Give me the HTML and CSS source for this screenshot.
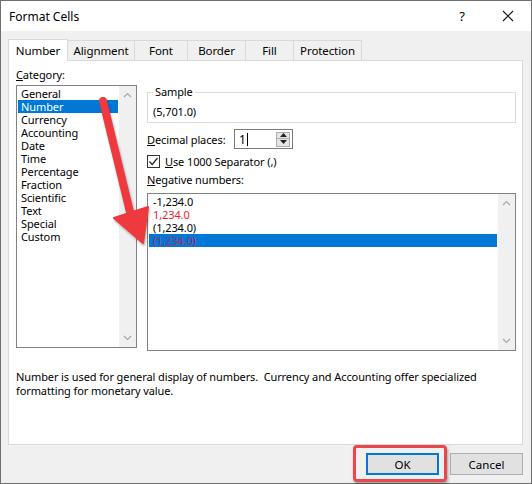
FILE: index.html
```html
<!DOCTYPE html>
<html lang="en">
<head>
    <meta charset="UTF-8">
    <title>Format Cells</title>
    <link rel="stylesheet" href="styles.css">
</head>
<body>

<div class="dialog">
    <div class="titlebar">
        <span class="title">Format Cells</span>
        <span class="help">?</span>
        <span class="close">
            <svg width="12" height="12" viewBox="0 0 12 12"><path d="M1 1 L11 11 M11 1 L1 11" stroke="#111" stroke-width="1.1" fill="none"/></svg>
        </span>
    </div>

    <div class="content">
        <div class="tabs">
            <div class="tab active tab-number">Number</div>
            <div class="tab tab-alignment">Alignment</div>
            <div class="tab tab-font">Font</div>
            <div class="tab tab-border">Border</div>
            <div class="tab tab-fill">Fill</div>
            <div class="tab tab-protection">Protection</div>
        </div>

        <div class="panel">
            <div class="main">
                <div class="left">
                    <div class="label"><u>C</u>ategory:</div>
                    <div class="listbox category">
                        <ul class="items">
                            <li>General</li>
                            <li class="sel">Number</li>
                            <li>Currency</li>
                            <li>Accounting</li>
                            <li>Date</li>
                            <li>Time</li>
                            <li>Percentage</li>
                            <li>Fraction</li>
                            <li>Scientific</li>
                            <li>Text</li>
                            <li>Special</li>
                            <li>Custom</li>
                        </ul>
                        <div class="scrollbar">
                            <svg width="9" height="6" viewBox="0 0 9 6"><polyline points="1,5 4.5,1.5 8,5" fill="none" stroke="#a8a8a8" stroke-width="1.2"/></svg>
                            <svg width="9" height="6" viewBox="0 0 9 6"><polyline points="1,1 4.5,4.5 8,1" fill="none" stroke="#a8a8a8" stroke-width="1.2"/></svg>
                        </div>
                    </div>
                </div>

                <div class="right">
                    <fieldset class="sample">
                        <legend>Sample</legend>
                        <div class="sample-value">(5,701.0)</div>
                    </fieldset>

                    <div class="row decimal">
                        <span class="decimal-label"><u>D</u>ecimal places:</span>
                        <div class="spin">
                            <span class="spin-value">1</span><span class="caret"></span>
                            <div class="spin-btns">
                                <span class="spin-btn"><svg width="7" height="4" viewBox="0 0 7 4"><polygon points="0,4 3.5,0 7,4" fill="#222"/></svg></span>
                                <span class="spin-btn"><svg width="7" height="4" viewBox="0 0 7 4"><polygon points="0,0 3.5,4 7,0" fill="#222"/></svg></span>
                            </div>
                        </div>
                    </div>

                    <div class="row check">
                        <span class="checkbox">
                            <svg width="11" height="11" viewBox="0 0 11 11"><polyline points="1.5,5.5 4.2,8.5 9.5,2" fill="none" stroke="#222" stroke-width="1.2"/></svg>
                        </span>
                        <span><u>U</u>se 1000 Separator (,)</span>
                    </div>

                    <div class="label neg-label"><u>N</u>egative numbers:</div>
                    <div class="listbox negative">
                        <ul class="items">
                            <li>-1,234.0</li>
                            <li class="red">1,234.0</li>
                            <li>(1,234.0)</li>
                            <li class="sel red">(1,234.0)</li>
                        </ul>
                        <div class="scrollbar">
                            <svg width="9" height="6" viewBox="0 0 9 6"><polyline points="1,5 4.5,1.5 8,5" fill="none" stroke="#a8a8a8" stroke-width="1.2"/></svg>
                            <svg width="9" height="6" viewBox="0 0 9 6"><polyline points="1,1 4.5,4.5 8,1" fill="none" stroke="#a8a8a8" stroke-width="1.2"/></svg>
                        </div>
                    </div>
                </div>
            </div>

            <p class="desc">Number is used for general display of numbers.&nbsp; Currency and Accounting offer specialized formatting for monetary value.</p>
        </div>

        <div class="buttons">
            <button class="btn default">OK</button>
            <button class="btn">Cancel</button>
        </div>
    </div>

    <!-- annotation: red box round OK and arrow pointing at the list -->
    <div class="callout"></div>
    <svg class="arrow" width="532" height="484" viewBox="0 0 532 484">
        <line x1="103" y1="101" x2="130" y2="212" stroke="#ee3a3e" stroke-width="8" stroke-linecap="round"/>
        <polygon points="114,218 148,207 143,243" fill="#ee3a3e" stroke="#ee3a3e" stroke-width="2" stroke-linejoin="round"/>
    </svg>
</div>

</body>
</html>
```

FILE: styles.css
```css
body {
    margin: 0;
    padding: 0;
    background-color: #fff;
    font-family: "Noto Sans", "Open Sans", sans-serif;
    font-size: 11px;
    letter-spacing: -0.1px;
    color: #000;
}
.dialog {
    position: relative;
    width: 532px;
    height: 484px;
    box-sizing: border-box;
    border: 1px solid #6f6f6f;
    background-color: #f0f0f0;
}
.titlebar {
    height: 30px;
    background-color: #fff;
    display: flex;
    align-items: center;
    padding: 0 0 0 8px;
}
.title {
    font-size: 12px;
    letter-spacing: 0;
    flex: 1;
}
.help {
    font-size: 13px;
    width: 46px;
    text-align: center;
}
.close {
    width: 46px;
    display: flex;
    justify-content: center;
}
.content {
    padding: 8px 8px 0 7px;
}
.tabs {
    display: flex;
    align-items: flex-end;
    height: 21px;
}
.tab {
    height: 20px;
    box-sizing: border-box;
    border: 1px solid #d9d9d9;
    border-bottom: none;
    border-left: none;
    display: flex;
    align-items: center;
    justify-content: center;
    font-size: 11.5px;
}
.tab.active {
    height: 22px;
    margin-bottom: -1px;
    background-color: #fff;
    border-left: 1px solid #d9d9d9;
    position: relative;
    z-index: 1;
}
.tab-number { width: 60px; }
.tab-alignment { width: 67px; }
.tab-font { width: 53px; }
.tab-border { width: 58px; }
.tab-fill { width: 48px; }
.tab-protection { width: 68px; }
.panel {
    height: 385px;
    box-sizing: border-box;
    background-color: #fff;
    border: 1px solid #d9d9d9;
    padding: 7px 5px 0 7px;
}
.main {
    display: flex;
    gap: 10px;
}
.left {
    width: 121px;
}
.label {
    line-height: 14px;
    height: 14px;
}
.listbox {
    display: flex;
    box-sizing: border-box;
    border: 1px solid #828282;
    background-color: #fff;
}
.listbox .items {
    list-style: none;
    margin: 0;
    padding: 1px 1px 0 1px;
    flex: 1;
}
.listbox li {
    line-height: 13px;
    height: 13px;
    padding-left: 3px;
    white-space: nowrap;
}
.listbox li.sel {
    background-color: #0078d7;
    color: #fff;
}
.listbox li.red {
    color: #e8232b;
}
.listbox li.sel.red {
    color: #b8285a;
}
.scrollbar {
    width: 17px;
    background-color: #f0f0f0;
    display: flex;
    flex-direction: column;
    justify-content: space-between;
    align-items: center;
    padding: 6px 0 6px 0;
}
.category {
    margin-top: 3px;
    height: 263px;
}
.right {
    width: 369px;
    padding-top: 17px;
}
.sample {
    margin: 0;
    padding: 0 5px 3px 5px;
    border: 1px solid #dcdcdc;
}
.sample legend {
    padding: 0 2px;
    line-height: 14px;
}
.sample-value {
    line-height: 14px;
    margin-top: 6px;
}
.row {
    display: flex;
    align-items: center;
}
.decimal {
    margin-top: 6px;
    height: 20px;
}
.decimal-label {
    width: 87px;
}
.spin {
    width: 59px;
    height: 20px;
    box-sizing: border-box;
    border: 1px solid #7a7a7a;
    display: flex;
    align-items: center;
    padding-left: 4px;
    background-color: #fff;
}
.spin-value {
    font-size: 12px;
}
.caret {
    width: 1px;
    height: 13px;
    background-color: #000;
    margin-left: 1px;
}
.spin-btns {
    margin-left: auto;
    margin-right: 2px;
    display: flex;
    flex-direction: column;
}
.spin-btn {
    width: 14px;
    height: 7px;
    box-sizing: border-box;
    border: 1px solid #adadad;
    background-color: #e5e5e5;
    display: flex;
    align-items: center;
    justify-content: center;
}
.spin-btn + .spin-btn {
    border-top: none;
    height: 8px;
}
.check {
    margin-top: 5px;
    height: 14px;
}
.checkbox {
    width: 13px;
    height: 13px;
    box-sizing: border-box;
    border: 1px solid #333;
    display: flex;
    align-items: center;
    justify-content: center;
    margin-right: 5px;
}
.neg-label {
    margin-top: 5px;
}
.negative {
    margin-top: 6px;
    height: 158px;
}
.negative li {
    padding-left: 4px;
}
.desc {
    margin: 19px 0 0 0;
    line-height: 14px;
    width: 490px;
}
.buttons {
    display: flex;
    justify-content: flex-end;
    gap: 11px;
    margin-top: 8px;
}
.btn {
    width: 73px;
    height: 22px;
    font-family: inherit;
    font-size: 11.5px;
    background-color: #e1e1e1;
    border: 1px solid #adadad;
    padding: 0;
    margin: 0;
}
.btn.default {
    border: 2px solid #0078d7;
}
.callout {
    position: absolute;
    left: 352px;
    top: 444px;
    width: 94px;
    height: 37px;
    box-sizing: border-box;
    border: 3px solid #e8474c;
    border-radius: 4px;
    box-shadow: 1px 2px 3px rgba(0, 0, 0, 0.35);
}
.arrow {
    position: absolute;
    left: -1px;
    top: -1px;
    pointer-events: none;
    filter: drop-shadow(1px 2px 1px rgba(0, 0, 0, 0.3));
}
```
